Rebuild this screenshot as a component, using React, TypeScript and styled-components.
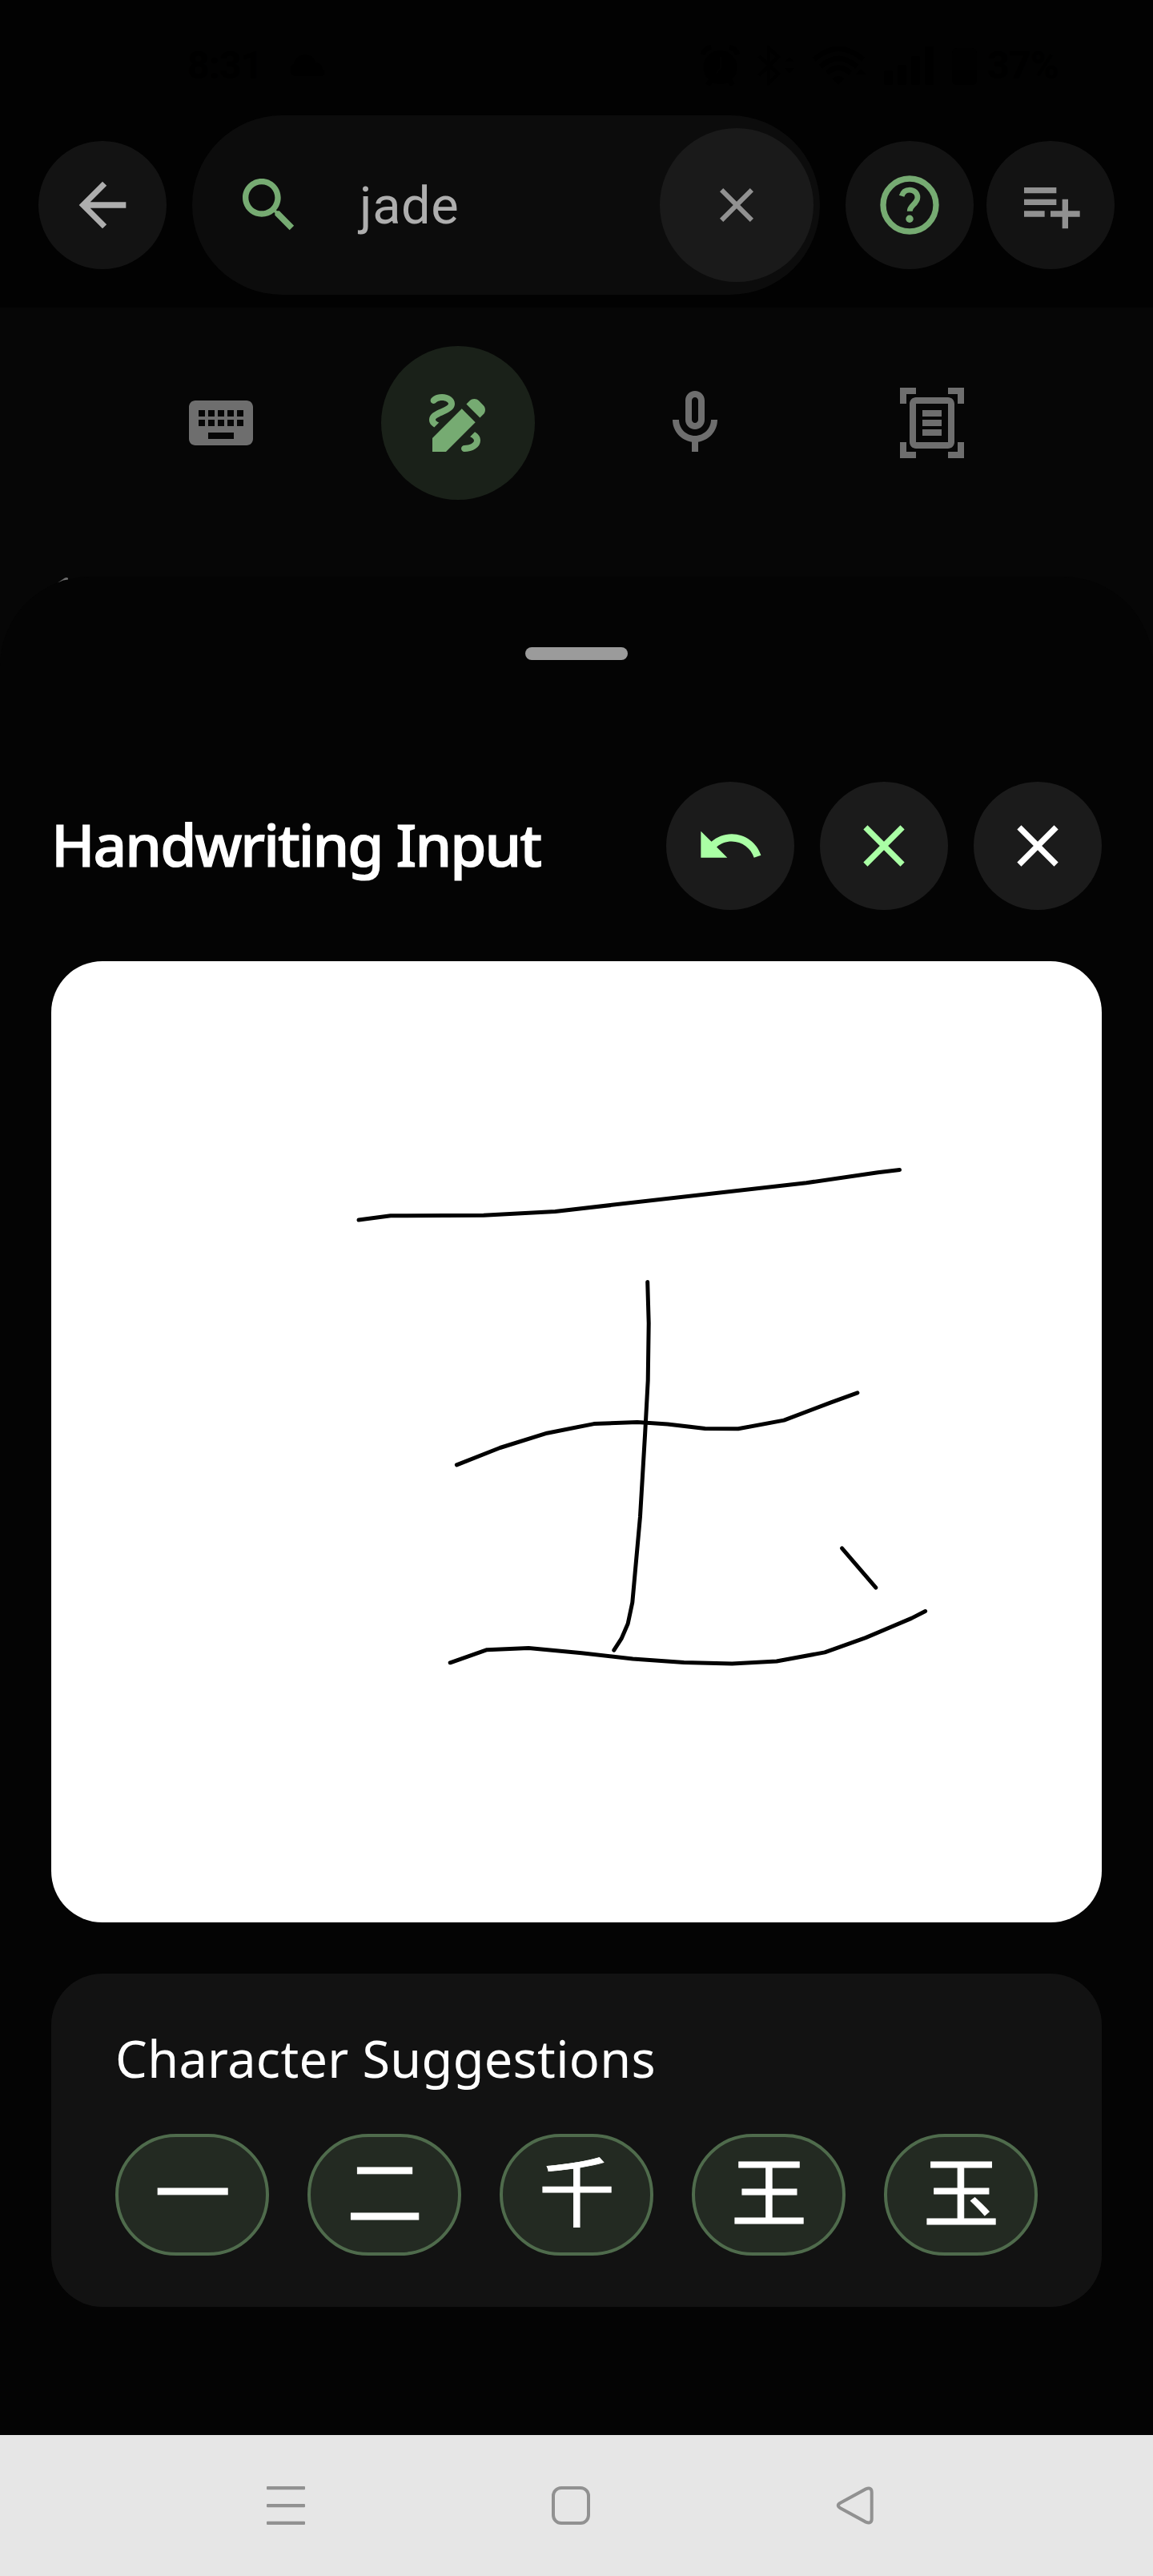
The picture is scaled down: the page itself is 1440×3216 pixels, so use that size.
import React from "react";
import styled, { createGlobalStyle } from "styled-components";

const GlobalStyle = createGlobalStyle`
  * { box-sizing: border-box; }
  html, body { margin: 0; padding: 0; background: #040404; }
  button { border: 0; padding: 0; margin: 0; font: inherit; color: inherit; }
`;

const Screen = styled.main`
  width: 1440px;
  height: 3216px;
  display: flex;
  flex-direction: column;
  overflow: hidden;
  background: #060606;
  font-family: Roboto, "Noto Sans", sans-serif;
`;

const Header = styled.header`
  height: 384px;
  background: #020202;
  display: flex;
  flex-direction: column;
`;

const StatusBar = styled.div`
  height: 144px;
  padding: 20px 118px 0 234px;
  display: flex;
  align-items: center;
  justify-content: space-between;
  color: #000000;
  font-size: 48px;
  font-weight: 700;
  line-height: 1;
  letter-spacing: -0.5px;
`;

const StatusGroup = styled.div<{ $gap: number }>`
  display: flex;
  align-items: center;
  gap: ${(p) => p.$gap}px;
`;

const SearchRow = styled.div`
  height: 224px;
  padding: 0 48px;
  display: flex;
  align-items: center;
`;

const RoundButton = styled.button<{ $size?: number; $bg: string; $fg: string }>`
  flex: none;
  width: ${(p) => p.$size ?? 160}px;
  height: ${(p) => p.$size ?? 160}px;
  border-radius: 50%;
  background: ${(p) => p.$bg};
  color: ${(p) => p.$fg};
  display: flex;
  align-items: center;
  justify-content: center;
`;

const SearchField = styled.div`
  flex: none;
  width: 784px;
  height: 224px;
  margin: 0 32px;
  padding: 0 8px 0 52px;
  border-radius: 112px;
  background: #0c0c0c;
  color: #76ab72;
  display: flex;
  align-items: center;
`;

const Query = styled.span`
  flex: 1;
  padding: 1px 0 0 69px;
  color: #aeaeae;
  font-size: 65px;
  line-height: 96px;
  letter-spacing: 0.6px;
`;

const HeaderActions = styled.div`
  display: flex;
  gap: 16px;
`;

const Tabs = styled.nav`
  height: 336px;
  padding: 48px 180px 0;
  display: flex;
  justify-content: center;
  gap: 104px;
`;

const Sheet = styled.section`
  position: relative;
  flex: 1;
  border-radius: 112px 112px 0 0;
  background: #040404;
  padding: 88px 64px 0;
  display: flex;
  flex-direction: column;
`;

const Sliver = styled.svg`
  position: absolute;
  left: 70px;
  top: 0;
`;

const Handle = styled.div`
  align-self: center;
  width: 128px;
  height: 16px;
  border-radius: 8px;
  background: #9b9b9b;
`;

const SheetHeader = styled.div`
  height: 160px;
  margin-top: 152px;
  display: flex;
  align-items: center;
  gap: 32px;
`;

const Title = styled.h1`
  flex: 1;
  margin: 0;
  padding: 0 0 4px 0;
  color: #ffffff;
  font-family: "Noto Sans", "Open Sans", sans-serif;
  font-size: 73px;
  font-weight: 500;
  line-height: 100px;
  letter-spacing: -2px;
  -webkit-text-stroke: 1.2px #ffffff;
  white-space: nowrap;
`;

const Pad = styled.div`
  height: 1200px;
  margin-top: 64px;
  border-radius: 64px;
  background: #ffffff;
  overflow: hidden;
`;

const Card = styled.div`
  height: 416px;
  margin-top: 64px;
  padding: 62px 80px 64px;
  border-radius: 64px;
  background: #121212;
  display: flex;
  flex-direction: column;
  justify-content: space-between;
`;

const CardTitle = styled.h2`
  margin: 0;
  color: #ffffff;
  font-family: "Noto Sans", "Open Sans", sans-serif;
  font-size: 63px;
  font-weight: 400;
  line-height: 88px;
  letter-spacing: 0.33px;
  white-space: nowrap;
`;

const Chips = styled.div`
  display: flex;
  gap: 48px;
`;

const Chip = styled.button`
  width: 192px;
  height: 152px;
  padding: 0 0 16px 1px;
  border: 4px solid #4f6b4c;
  border-radius: 76px;
  background: #232a22;
  color: #ffffff;
  font-family: "Noto Sans CJK SC", sans-serif;
  font-size: 95px;
  font-weight: 400;
  line-height: 128px;
  -webkit-text-stroke: 0.9px #ffffff;
  display: flex;
  align-items: center;
  justify-content: center;
`;

const NavBar = styled.footer`
  height: 176px;
  padding: 0 343px 0 329px;
  background: #e6e6e6;
  display: flex;
  align-items: center;
  justify-content: space-between;
`;

const Icon = ({ d, size = 88 }: { d: string; size?: number }) => (
  <svg width={size} height={size} viewBox="0 0 24 24" fill="currentColor" fillRule="evenodd">
    <path d={d} />
  </svg>
);

const paths = {
  back: "M20 11H7.83l5.59-5.59L12 4l-8 8 8 8 1.41-1.41L7.83 13H20v-2z",
  search:
    "M15.5 14h-.79l-.28-.27C15.41 12.59 16 11.11 16 9.5 16 5.91 13.09 3 9.5 3S3 5.91 3 9.5 5.91 16 9.5 16c1.61 0 3.09-.59 4.23-1.57l.27.28v.79l5 4.99L20.49 19l-4.99-5zm-6 0C7.01 14 5 11.99 5 9.5S7.01 5 9.5 5 14 7.01 14 9.5 11.99 14 9.5 14z",
  close:
    "M19 6.41L17.59 5 12 10.59 6.41 5 5 6.41 10.59 12 5 17.59 6.41 19 12 13.41 17.59 19 19 17.59 13.41 12z",
  playlistAdd:
    "M14 10H3v2h11v-2zm0-4H3v2h11V6zm4 8v-4h-2v4h-4v2h4v4h2v-4h4v-2h-4zM3 16h7v-2H3v2z",
  keyboard:
    "M20 5H4c-1.1 0-2 .9-2 2v10c0 1.1.9 2 2 2h16c1.1 0 2-.9 2-2V7c0-1.1-.9-2-2-2zM5 8h2v2H5zM8 8h2v2H8zM11 8h2v2h-2zM14 8h2v2h-2zM17 8h2v2h-2zM5 11h2v2H5zM8 11h2v2H8zM11 11h2v2h-2zM14 11h2v2h-2zM17 11h2v2h-2zM8 15h8v2H8z",
  draw:
    "M18.85 10.39l1.06-1.06c.78-.78.78-2.05 0-2.83L18.5 5.09c-.78-.78-2.05-.78-2.83 0l-1.06 1.06 4.24 4.24zM13.19 7.57L4 16.76V21h4.24l9.19-9.19-4.24-4.24zM19 17.5c0 2.19-2.54 3.5-5 3.5-.55 0-1-.45-1-1s.45-1 1-1c1.54 0 3-.73 3-1.5 0-.47-.48-.87-1.23-1.2l1.48-1.48c1.07.63 1.75 1.47 1.75 2.68zM4.58 13.35C3.61 12.79 3 12.06 3 11c0-1.8 1.89-2.63 3.56-3.36C7.59 7.18 9 6.56 9 6c0-.41-.78-1-2-1-1.26 0-1.8.61-1.83.64-.35.41-.98.46-1.4.12-.41-.34-.49-.95-.15-1.38C3.73 4.24 4.76 3 7 3s4 1.32 4 3c0 1.87-1.93 2.72-3.64 3.47C6.42 9.88 5 10.5 5 11c0 .31.43.6 1.07.86l-1.49 1.49z",
  mic:
    "M12 14c1.66 0 3-1.34 3-3V5c0-1.66-1.34-3-3-3S9 3.34 9 5v6c0 1.66 1.34 3 3 3zm-1-9c0-.55.45-1 1-1s1 .45 1 1v6c0 .55-.45 1-1 1s-1-.45-1-1V5zm6 6c0 2.76-2.24 5-5 5s-5-2.24-5-5H5c0 3.53 2.61 6.43 6 6.92V21h2v-3.08c3.39-.49 6-3.39 6-6.92h-2z",
  scan:
    "M7 3H4v3H2V1h5v2zm15 3V1h-5v2h3v3h2zM7 21H4v-3H2v5h5v-2zm13-3v3h-3v2h5v-5h-2zM19 18c0 1.1-.9 2-2 2H7c-1.1 0-2-.9-2-2V6c0-1.1.9-2 2-2h10c1.1 0 2 .9 2 2v12zM17 6H7v12h10V6zm-2 2H9v2h6V8zm0 3H9v2h6v-2zm0 3H9v2h6v-2z",
  undo:
    "M12.5 8c-2.65 0-5.05.99-6.9 2.6L2 7v9h9l-3.62-3.62c1.39-1.16 3.16-1.88 5.12-1.88 3.54 0 6.55 2.31 7.6 5.5l2.37-.78C21.08 11.03 17.15 8 12.5 8z",
};

const HelpIcon = () => (
  <svg width="88" height="88" viewBox="0 0 24 24" fill="none" stroke="currentColor">
    <circle cx="12" cy="12" r="9" strokeWidth="2" />
    <path
      d="M9.3 8.95C9.7 7.6 10.7 6.85 12 6.85c1.6 0 2.7 1.1 2.7 2.5 0 1.15-.6 1.75-1.35 2.5-.8.8-1.3 1.2-1.3 2.25"
      strokeWidth="1.85"
    />
    <circle cx="12" cy="16.7" r="1.28" fill="currentColor" stroke="none" />
  </svg>
);

const Cloud = () => (
  <svg width="46" height="28" viewBox="0 0 46 28" fill="currentColor">
    <path d="M8 27a8 8 0 0 1-2-15C8 4 14 0 20 0s12 4 13 10c6 0 9 5 9 9 4 2 3 8-2 8z" />
  </svg>
);

const Alarm = () => (
  <svg width="49" height="52" viewBox="0 0 49 52" fill="none" stroke="currentColor" strokeWidth="6">
    <circle cx="24.5" cy="28" r="21" fill="currentColor" stroke="none" />
    <path d="M3 12Q5 4 13 3M46 12Q44 4 36 3M13 44l-4 6M36 44l4 6" />
    <path d="M25 15v14l-6 7" stroke="#020202" strokeWidth="2" />
  </svg>
);

const Bluetooth = () => (
  <svg width="46" height="50" viewBox="0 0 46 50" fill="none" stroke="currentColor" strokeWidth="4">
    <path d="M2 13l24 22-12 12V3l12 11L2 37" />
    <path d="M34 20l6-6 6 6zM34 28l6 6 6-6z" fill="currentColor" stroke="none" />
  </svg>
);

const Wifi = () => (
  <svg width="68" height="50" viewBox="0 0 68 50" fill="none" stroke="currentColor" strokeWidth="6">
    <path d="M3 17Q33 -9 64 17M11 26Q33 6 56 26M19 34Q33 21 48 34" />
    <path d="M26 41q7-6 14 0l-7 8zM55 36l6-7 6 7z" fill="currentColor" stroke="none" />
  </svg>
);

const Signal = () => (
  <svg width="62" height="50" viewBox="0 0 62 50" fill="currentColor">
    <rect x="0" y="31" width="11" height="18" rx="2" />
    <rect x="17" y="24" width="11" height="25" rx="2" />
    <rect x="34" y="13" width="11" height="36" rx="2" />
    <rect x="51" y="1" width="11" height="48" rx="2" />
  </svg>
);

const Battery = () => (
  <svg width="33" height="50" viewBox="0 0 33 50" fill="currentColor">
    <rect x="1" y="3" width="31" height="46" rx="6" fill="#010101" />
    <path d="M1 30h31v13a6 6 0 0 1-6 6H7a6 6 0 0 1-6-6z" />
  </svg>
);

const strokes = [
  "384,323.1 423.8,317.8 540,317.3 629.4,312.4 943.1,276.7 1032.4,263.8 1059.5,260.6",
  "744.7,400.4 746.2,452 745.2,523.6 741.6,590.5 735.5,693.2 725.8,800.4 720.2,827.1 712,845.9 702.8,860.2",
  "506.4,628.9 560.5,607.5 619.2,589.2 677.8,577.6 731.9,575.4 769.7,578 816.6,583.4 857.9,583.8 915.1,573.1 973.8,550.8 1006.9,538.8",
  "987.5,732.9 1029.9,782.1",
  "498.2,875.8 544.2,859.7 596.2,857.5 662.5,863.8 726.3,870.9 790.1,875.4 850.3,877.1 905.9,874 966.1,862.9 1017.1,844.6 1074.3,820.4 1091.6,811.5",
];

const suggestions = ["一", "二", "千", "王", "玉"];

const tabs = [
  { name: "Keyboard", d: paths.keyboard },
  { name: "Handwriting", d: paths.draw, active: true },
  { name: "Voice", d: paths.mic },
  { name: "Scan", d: paths.scan },
];

export default function App() {
  return (
    <>
      <GlobalStyle />
      <Screen>
        <Header>
          <StatusBar>
            <StatusGroup $gap={33}>
              <span>8:31</span>
              <Cloud />
            </StatusGroup>
            <StatusGroup $gap={22}>
              <Alarm />
              <Bluetooth />
              <Wifi />
              <Signal />
              <StatusGroup $gap={12}>
                <Battery />
                <span>37%</span>
              </StatusGroup>
            </StatusGroup>
          </StatusBar>
          <SearchRow>
            <RoundButton $bg="#131313" $fg="#aeaeae" aria-label="Back">
              <Icon d={paths.back} />
            </RoundButton>
            <SearchField>
              <Icon d={paths.search} />
              <Query>jade</Query>
              <RoundButton $size={192} $bg="#1a1a1a" $fg="#919191" aria-label="Clear">
                <Icon d={paths.close} size={72} />
              </RoundButton>
            </SearchField>
            <HeaderActions>
              <RoundButton $bg="#131313" $fg="#76ab72" aria-label="Help">
                <HelpIcon />
              </RoundButton>
              <RoundButton $bg="#131313" $fg="#919191" aria-label="Add to list">
                <Icon d={paths.playlistAdd} />
              </RoundButton>
            </HeaderActions>
          </SearchRow>
        </Header>

        <Tabs>
          {tabs.map((t) => (
            <RoundButton
              key={t.name}
              aria-label={t.name}
              $size={192}
              $bg={t.active ? "#1a2119" : "transparent"}
              $fg={t.active ? "#76ab72" : "#6e6e6e"}
            >
              <Icon d={t.d} size={96} />
            </RoundButton>
          ))}
        </Tabs>

        <Sheet>
          <Sliver width="18" height="10" viewBox="0 0 18 10">
            <path d="M2 7.5L11 1.5q3-1 4 .5v1.5L9 4.5z" fill="#6e6e6e" />
          </Sliver>
          <Handle />
          <SheetHeader>
            <Title>Handwriting Input</Title>
            <RoundButton $bg="#1b1b1b" $fg="#aaffa5" aria-label="Undo">
              <Icon d={paths.undo} />
            </RoundButton>
            <RoundButton $bg="#1b1b1b" $fg="#aaffa5" aria-label="Clear strokes">
              <Icon d={paths.close} />
            </RoundButton>
            <RoundButton $bg="#1b1b1b" $fg="#ffffff" aria-label="Close">
              <Icon d={paths.close} />
            </RoundButton>
          </SheetHeader>
          <Pad>
            <svg
              width="1312"
              height="1200"
              viewBox="0 0 1312 1200"
              fill="none"
              stroke="#000000"
              strokeWidth="5"
              strokeLinecap="round"
              strokeLinejoin="round"
            >
              {strokes.map((points) => (
                <polyline key={points} points={points} />
              ))}
            </svg>
          </Pad>
          <Card>
            <CardTitle>Character Suggestions</CardTitle>
            <Chips>
              {suggestions.map((s) => (
                <Chip key={s}>{s}</Chip>
              ))}
            </Chips>
          </Card>
        </Sheet>

        <NavBar>
          <svg width="56" height="56" viewBox="0 0 56 56" fill="#919191">
            <rect x="4" y="4" width="48" height="4.3" rx="1" />
            <rect x="4" y="26" width="48" height="4.3" rx="1" />
            <rect x="4" y="47.8" width="48" height="4.3" rx="1" />
          </svg>
          <svg width="56" height="56" viewBox="0 0 56 56" fill="none" stroke="#919191" strokeWidth="4">
            <rect x="6" y="6" width="44" height="44" rx="10" />
          </svg>
          <svg width="56" height="56" viewBox="0 0 56 56" fill="none" stroke="#919191" strokeWidth="4">
            <path d="M8.5 24.8L40.3 7.4Q47.7 4.5 47.7 11.5V44.5Q47.7 51.5 40.3 48.6L8.5 31.2Q3 28 8.5 24.8z" />
          </svg>
        </NavBar>
      </Screen>
    </>
  );
}
